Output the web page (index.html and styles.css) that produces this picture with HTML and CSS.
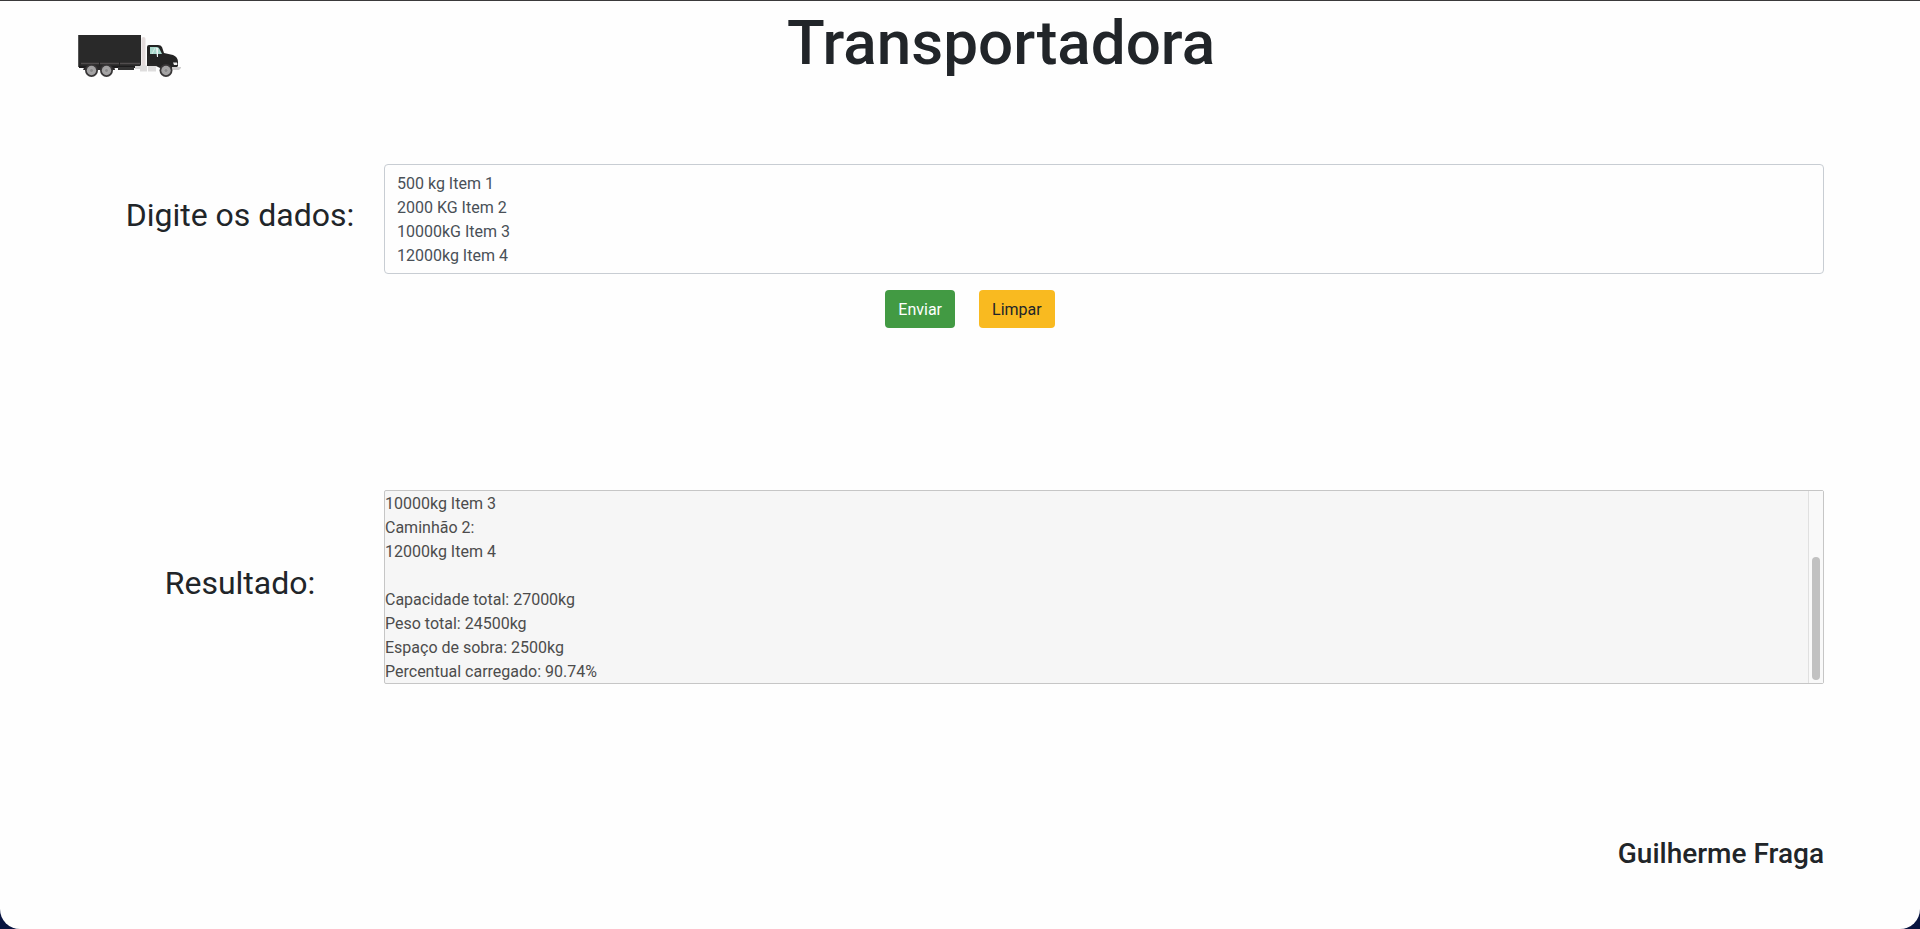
FILE: index.html
```html
<!DOCTYPE html>
<html lang="pt-BR">
<head>
<meta charset="utf-8">
<meta name="viewport" content="width=device-width, initial-scale=1">
<title>Transportadora</title>
<link rel="stylesheet" href="styles.css">
</head>
<body>
<div class="page">
  <header class="header">
    <svg class="logo" viewBox="0 0 104 44" role="img" aria-label="Caminhão">
      <path d="M63.500 5q0-2 2-2t2 2v27h-4z" fill="#e4dcdc"/>
      <rect x="1" y="31" width="61" height="3" fill="#1c1b1c"/>
      <rect x="0" y="1" width="63" height="31" fill="#292929"/>
      <path d="M0 1h1v32H0z" fill="#555"/>
      <path d="M3 29.500h59" stroke="#514d4e" stroke-width="1.300"/>
      <path d="M21.500 28v4M41.500 28v4" stroke="#222" stroke-width="1"/>
      <path d="M5 36q1-4 6-4h20q6 0 6 4z" fill="#292728"/>
      <rect x="40" y="33" width="16" height="3" fill="#333"/>
      <path d="M57 32h6v3h-6z" fill="#d9d8d8"/>
      <path d="M62 31.500h7v6h-7zM70 31.500h8v6h-8z" fill="#dedddd"/>
      <path d="M69 32V13q0-2 2-2h9q3 0 4 2l2 6 9 2q5 2 5 7v4l-2 2H82l-4-2z" fill="#242424"/>
      <path d="M72 13h7q2 0 3 3l2 4H72z" fill="#a9d8cc"/>
      <path d="M78 14h2v9h-1z" fill="#edf3f3"/>
      <path d="M74 20l3-6" stroke="#d8eee8" stroke-width="1"/>
      <path d="M71 22v9h8" fill="none" stroke="#343434" stroke-width=".6"/>
      <path d="M94 33h9v1l-2 2h-7z" fill="#cecdcd"/>
      <path d="M95 28.500h4q1 2 0 2.500h-3z" fill="#eee"/>
      <g fill="#383637"><circle cx="13.500" cy="36.500" r="6.500"/><circle cx="28.500" cy="36.500" r="6.500"/><circle cx="88" cy="36.500" r="6.500"/></g>
      <g fill="#a3a2a3"><circle cx="13.500" cy="36.500" r="4.700"/><circle cx="28.500" cy="36.500" r="4.700"/><circle cx="88" cy="36.500" r="4.700"/></g>
      <g fill="#8a898a" stroke="#b3b3b3" stroke-width=".6"><circle cx="13.500" cy="36.500" r="2"/><circle cx="28.500" cy="36.500" r="2"/><circle cx="88" cy="36.500" r="2"/></g>
    </svg>
    <h1 class="title">Transportadora</h1>
  </header>
  <main class="content">
    <form class="entry">
      <div class="row">
        <label class="label" for="dados">Digite os dados:</label>
        <textarea class="field" id="dados" rows="4" spellcheck="false">500 kg Item 1
2000 KG Item 2
10000kG Item 3
12000kg Item 4</textarea>
      </div>
      <div class="actions">
        <button class="btn btn-send" type="button">Enviar</button>
        <button class="btn btn-clear" type="reset">Limpar</button>
      </div>
    </form>
    <div class="row">
      <label class="label" for="resultado">Resultado:</label>
      <div class="result">
        <textarea class="field field-result" id="resultado" rows="8" readonly spellcheck="false">10000kg Item 3
Caminhão 2:
12000kg Item 4

Capacidade total: 27000kg
Peso total: 24500kg
Espaço de sobra: 2500kg
Percentual carregado: 90.74%</textarea>
        <div class="scrollbar" aria-hidden="true"><div class="thumb"></div></div>
      </div>
    </div>
  </main>
  <footer class="footer">Guilherme Fraga</footer>
</div>
</body>
</html>
```
FILE: styles.css
```css
* { box-sizing: border-box; }

body {
  margin: 0;
  background: #081440;
  color: #212529;
  font: 400 16px/24px Roboto, "Liberation Sans", sans-serif;
}

.page {
  display: flex;
  flex-direction: column;
  min-height: 100vh;
  background: #fefefe;
  border-top: 1px solid #3a393b;
  border-radius: 0 0 20px 20px;
}

.header {
  display: grid;
  grid-template-columns: 104px 1fr;
  padding: 2px 96px 0 78px;
}

.logo {
  width: 104px;
  height: 44px;
  margin-top: 31px;
}

.title {
  margin: 0;
  padding-right: 4px;
  font-size: 62px;
  font-weight: 500;
  line-height: 80px;
  text-align: center;
}

.content {
  padding: 81px 5% 0;
}

.row {
  display: grid;
  grid-template-columns: 1fr 5fr;
  align-items: center;
}

.label {
  padding-bottom: 8px;
  font-size: 32px;
  font-weight: 400;
  line-height: 38px;
  text-align: center;
}

.field {
  display: block;
  width: 100%;
  padding: 7px 12px 5px;
  border: 1px solid #c8cdd3;
  border-radius: 4px;
  background: #fefefe;
  color: #495057;
  font: inherit;
  resize: none;
  outline: 0;
  overflow: hidden;
}

.result {
  position: relative;
}

.field-result {
  padding: 1px 0 0;
  height: 194px;
  border-color: #c6c6c6;
  border-radius: 2px;
  background: #f6f6f6;
  color: #4c4c4c;
}

.scrollbar {
  position: absolute;
  top: 1px;
  right: 1px;
  bottom: 1px;
  display: flex;
  align-items: flex-end;
  width: 15px;
  padding: 3px;
  background: #f9f9f9;
  border-left: 1px solid #e0e0e0;
}

.thumb {
  width: 8px;
  height: 66%;
  border-radius: 4px;
  background: #c1c1c1;
}

.actions {
  display: flex;
  justify-content: center;
  gap: 24px;
  padding: 16px 0 162px;
  margin-left: 20px;
}

.btn {
  padding: 7px 12px 5px;
  border: 1px solid transparent;
  border-radius: 4px;
  font: inherit;
}

.btn-send {
  background: #429a43;
  color: #fff;
}

.btn-clear {
  background: #f9ba20;
  color: #212529;
}

.footer {
  padding: 153px 5% 57px;
  font-size: 28px;
  font-weight: 500;
  line-height: 34px;
  text-align: right;
}
```
